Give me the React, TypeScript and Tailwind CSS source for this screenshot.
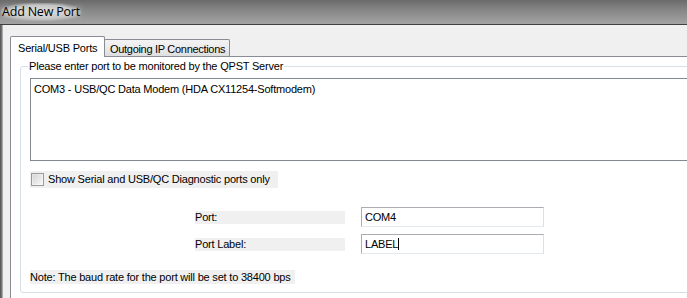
import React from 'react';

const TitleBar: React.FC = () => (
  <div className="h-[25px] w-full bg-[linear-gradient(180deg,#6a6a6a_0%,#828282_35%,#979797_75%,#a3a3a3_100%)] border-b border-[#3f3f3f] flex items-center pl-[2px]">
    <div className="rounded-full bg-[radial-gradient(ellipse_at_center,#d6d6d6_0%,#c2c2c2_55%,transparent_80%)] px-[1px] py-[1px] -ml-[1px]">
      <span className="font-['Open_Sans','Liberation_Sans',sans-serif] text-[12.5px] text-black leading-none whitespace-nowrap [text-shadow:0_0_6px_#ffffff]">
        Add New Port
      </span>
    </div>
  </div>
);

const Tabs: React.FC = () => (
  <div className="flex items-end h-[20px]">
    <div className="relative z-10 -mb-[1px] h-[21px] w-[95px] bg-white border border-b-0 border-[#898c95] rounded-t-[2px] pl-[7px] pt-[3px] whitespace-nowrap">
      Serial/USB Ports
    </div>
    <div className="h-[17px] w-[126px] -ml-[1px] bg-[linear-gradient(180deg,#f3f3f3_0%,#ebebeb_50%,#dedede_100%)] border border-b-0 border-[#898c95] rounded-t-[2px] pl-[5px] pt-[1px] whitespace-nowrap tracking-[-0.3px]">
      Outgoing IP Connections
    </div>
  </div>
);

const FieldRow: React.FC<{ label: string; value: string; caret?: boolean }> = ({ label, value, caret }) => (
  <div className="flex items-center">
    <div className="w-[150px] h-[13px] bg-[#f0f0f0] leading-[13px] whitespace-nowrap">{label}</div>
    <div className="ml-[16px] w-[183px] h-[20px] bg-white border border-[#abadb3] border-b-[#e3e9ef] border-r-[#dbdfe6] pl-[3px] leading-[18px] whitespace-nowrap">
      {value}
      {caret && <span className="inline-block w-[1px] h-[12px] bg-black align-[-2px]" />}
    </div>
  </div>
);

export default function App() {
  return (
    <div className="w-[687px] h-[298px] overflow-hidden bg-[#f0f0f0] font-['Liberation_Sans',Arial,sans-serif] text-[11px] tracking-[-0.2px] text-black">
      <TitleBar />
      <div className="flex h-[273px]">
        {/* window frame */}
        <div className="w-[3px] shrink-0 bg-[linear-gradient(90deg,#5e5e5e_0%,#5e5e5e_33%,#8a8a8a_66%,#c8c8c8_100%)]" />
        <div className="shrink-0 w-[720px] pl-[7px] pt-[11px] bg-[#f0f0f0]">
          <Tabs />
          <div className="h-[242px] bg-white border-t border-l border-[#898c95] pl-[9px]">
            <fieldset className="mt-[3px] h-[233px] border border-[#d5dfe5] rounded-[3px] pl-[9px]">
              <legend className="-ml-[2px] px-[1px] leading-[13px] whitespace-nowrap">
                Please enter port to be monitored by the QPST Server
              </legend>
              <div className="mt-[5px] h-[83px] bg-white border border-[#828790] pl-[3px] pt-[2px] whitespace-nowrap">
                COM3 - USB/QC Data Modem (HDA CX11254-Softmodem)
              </div>
              <div className="mt-[10px] w-[248px] h-[17px] bg-[#f0f0f0] flex items-center whitespace-nowrap">
                <div className="ml-[1px] w-[13px] h-[13px] shrink-0 border border-[#9a9a9a] bg-[linear-gradient(135deg,#e2e2e2_0%,#f2f2f2_60%,#fbfbfb_100%)] flex items-center justify-center">
                  <div className="w-[9px] h-[9px] bg-[linear-gradient(135deg,#d6d6d6_0%,#e8e8e8_60%,#f6f6f6_100%)]" />
                </div>
                <span className="ml-[4px]">Show Serial and USB/QC Diagnostic ports only</span>
              </div>
              <div className="mt-[19px] ml-[165px] flex flex-col gap-[7px]">
                <FieldRow label="Port:" value="COM4" />
                <FieldRow label="Port Label:" value="LABEL" caret />
              </div>
              <div className="mt-[16px] w-[265px] h-[14px] bg-[#f0f0f0] leading-[14px] whitespace-nowrap">
                Note: The baud rate for the port will be set to 38400 bps
              </div>
            </fieldset>
          </div>
        </div>
      </div>
    </div>
  );
}
